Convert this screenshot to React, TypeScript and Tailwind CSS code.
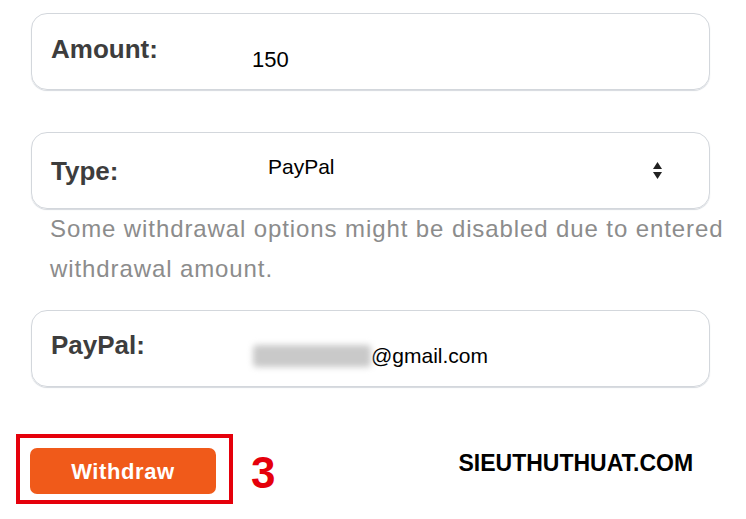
import React from "react";

export default function App() {
  return (
    <div
      className="w-[746px] h-[519px] bg-white overflow-hidden pt-[13px] flex flex-col"
      style={{ fontFamily: '"Liberation Sans", Arial, sans-serif' }}
    >
      {/* Amount */}
      <div className="ml-[31px] w-[679px] h-[77px] rounded-[16px] border border-[#d3d7dc] shadow-[0_1px_1px_#d5d9de] flex items-center pl-[19px]">
        <div className="w-[201px] text-[26px] font-bold text-[#3d3d3d] mb-[4px]">Amount:</div>
        <div className="text-[22px] text-black mt-[15px]">150</div>
      </div>

      {/* Type */}
      <div className="mt-[42px] ml-[31px] w-[679px] h-[77px] rounded-[16px] border border-[#d3d7dc] shadow-[0_1px_1px_#d5d9de] flex items-center pl-[19px]">
        <div className="w-[217px] text-[26px] font-bold text-[#3d3d3d] mt-[2px]">Type:</div>
        <div className="text-[21px] text-black mb-[8px]">PayPal</div>
        <div className="ml-auto mr-[47px] flex flex-col items-center gap-[3px]">
          <svg width="9" height="7" viewBox="0 0 9 7">
            <path d="M4.5 0 L9 7 L0 7 Z" fill="#222" />
          </svg>
          <svg width="9" height="7" viewBox="0 0 9 7">
            <path d="M0 0 L9 0 L4.5 7 Z" fill="#222" />
          </svg>
        </div>
      </div>

      <div className="ml-[50px] text-[24px] leading-[40px] text-[#8c8c8c] tracking-[0.9px] whitespace-nowrap">
        Some withdrawal options might be disabled due to entered
        <br />
        withdrawal amount.
      </div>

      {/* PayPal */}
      <div className="mt-[21px] ml-[31px] w-[679px] h-[77px] rounded-[16px] border border-[#d3d7dc] shadow-[0_1px_1px_#d5d9de] flex items-center pl-[19px]">
        <div className="w-[202px] text-[26px] font-bold text-[#3d3d3d] mb-[6px]">PayPal:</div>
        <div className="flex items-center mt-[14px]">
          <div className="w-[118px] h-[22px] bg-[#c9c9c9] blur-[3px] rounded-sm"></div>
          <span className="text-[21px] text-black">@gmail.com</span>
        </div>
      </div>

      {/* Bottom row */}
      <div className="mt-[47px] flex items-center">
        <div className="ml-[16px] w-[217px] h-[70px] border-[4px] border-[#e5000b] pl-[10px] pt-[10px]">
          <button className="w-[186px] h-[46px] rounded-[7px] bg-[#f05a1a] text-white text-[22px] font-bold tracking-[0.6px]">
            Withdraw
          </button>
        </div>
        <div className="ml-[18px] text-[44px] font-bold text-[#e5000b] leading-none mt-[8px]">3</div>
        <div className="ml-[183px] text-[23px] font-bold text-black mb-[12px]">SIEUTHUTHUAT.COM</div>
      </div>
    </div>
  );
}
